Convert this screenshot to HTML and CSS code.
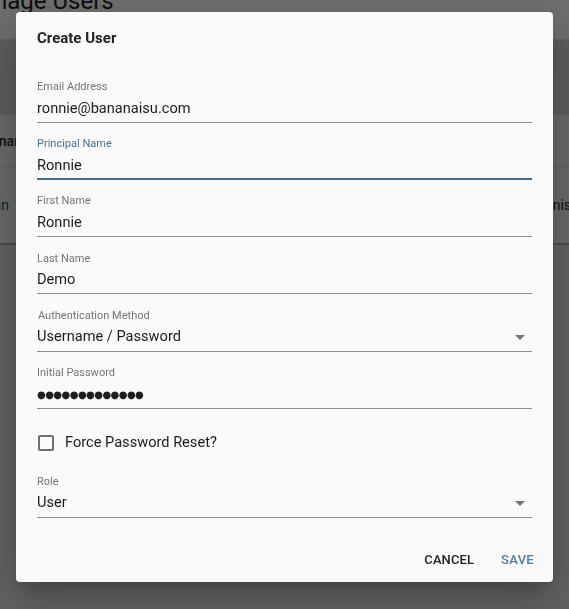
FILE: index.html
```html
<!DOCTYPE html>
<html lang="en">
<head>
<meta charset="utf-8">
<title>Create User</title>
<link rel="stylesheet" href="styles.css">
</head>
<body>
<div class="page">
  <header class="page-head"><h1 class="page-title">Manage Users</h1></header>
  <div class="toolbar"></div>
  <div class="table">
    <div class="trow thead"><span class="cell first">Username</span><span class="cell last">Role</span></div>
    <div class="trow tbody"><span class="cell first link">admin</span><span class="cell last">Administrator</span></div>
  </div>
</div>
<div class="backdrop"></div>
<div class="dialog" role="dialog">
  <h2 class="dialog-title">Create User</h2>
  <div class="dialog-content">
    <div class="field">
      <label class="field-label">Email Address</label>
      <div class="field-input">ronnie@bananaisu.com</div>
    </div>
    <div class="field focused">
      <label class="field-label">Principal Name</label>
      <div class="field-input">Ronnie</div>
    </div>
    <div class="field">
      <label class="field-label">First Name</label>
      <div class="field-input">Ronnie</div>
    </div>
    <div class="field">
      <label class="field-label">Last Name</label>
      <div class="field-input">Demo</div>
    </div>
    <div class="field select">
      <label class="field-label shifted">Authentication Method</label>
      <div class="field-input"><span class="value">Username / Password</span><svg class="arrow" viewBox="0 0 24 24" width="24" height="24"><path d="M7 10l5 5 5-5z"/></svg></div>
    </div>
    <div class="field">
      <label class="field-label">Initial Password</label>
      <div class="field-input dots">●●●●●●●●●●●●●</div>
    </div>
    <div class="check-row">
      <span class="checkbox"></span>
      <span class="check-label">Force Password Reset?</span>
    </div>
    <div class="field select role">
      <label class="field-label">Role</label>
      <div class="field-input"><span class="value">User</span><svg class="arrow" viewBox="0 0 24 24" width="24" height="24"><path d="M7 10l5 5 5-5z"/></svg></div>
    </div>
  </div>
  <div class="dialog-actions">
    <button class="btn">Cancel</button>
    <button class="btn primary">Save</button>
  </div>
</div>
</body>
</html>
```
FILE: styles.css
```css
html, body {
  margin: 0;
  padding: 0;
}
body {
  font-family: Roboto, "Liberation Sans", sans-serif;
  width: 569px;
  height: 609px;
  overflow: hidden;
}
.page {
  height: 609px;
  background: #c8c8c8;
  overflow: hidden;
}
.page-head {
  height: 39px;
  background: #dedede;
  border-bottom: 1px solid #c4c4c4;
  overflow: hidden;
}
.page-title {
  margin: -15px 0 0 -40px;
  font-size: 24px;
  line-height: 32px;
  font-weight: 400;
  color: #1a1a1a;
  white-space: nowrap;
}
.toolbar {
  height: 75px;
  background: #bcbcbc;
}
.table {
  background: #d6d6d6;
}
.trow {
  display: grid;
  grid-template-columns: 550px auto;
  align-items: center;
  margin-left: -30px;
  border-bottom: 1px solid #c0c0c0;
  font-size: 14px;
  color: #222;
  white-space: nowrap;
}
.thead {
  height: 51px;
  font-weight: 500;
}
.tbody {
  height: 76px;
  border-bottom: 2px solid #9a9a9a;
}
.link {
  color: #1d3a5a;
}
.backdrop {
  position: fixed;
  inset: 0;
  background: rgba(0, 0, 0, 0.5);
}
.dialog {
  position: fixed;
  left: 16px;
  top: 12px;
  width: 537px;
  height: 570px;
  box-sizing: border-box;
  background: #fafafa;
  border-radius: 4px;
  box-shadow: 0 11px 15px -7px rgba(0,0,0,0.2), 0 24px 38px 3px rgba(0,0,0,0.14), 0 9px 46px 8px rgba(0,0,0,0.12);
  display: flex;
  flex-direction: column;
  padding: 14px 21px 0;
}
.dialog-title {
  margin: 0;
  font-size: 15px;
  line-height: 24px;
  font-weight: 700;
  color: #212121;
}
.dialog-content {
  display: flex;
  flex-direction: column;
  padding-top: 15.8px;
}
.field {
  display: flex;
  flex-direction: column;
  margin-top: 14.2px;
}
.field-label {
  font-size: 11px;
  line-height: 13px;
  color: #757575;
}
.field-label.shifted {
  padding-left: 1px;
}
.field-input {
  display: flex;
  align-items: center;
  font-size: 14.6px;
  line-height: 19px;
  padding: 5.6px 0 4.4px;
  color: #1c1c1c;
  border-bottom: 1px solid #8f8f8f;
}
.field.focused .field-label {
  color: #4a7394;
}
.field.focused .field-input {
  padding-bottom: 3.4px;
  border-bottom: 2px solid #426b88;
}
.select .value {
  flex: 1;
}
.arrow {
  fill: #757575;
  margin: -3px 0 -2px;
  position: relative;
  top: 0.5px;
}
.dots {
  font-family: "DejaVu Sans", sans-serif;
  font-size: 10px;
  letter-spacing: -0.55px;
  color: #1e1e1e;
  position: relative;
  top: 0.5px;
}
.check-row {
  display: flex;
  align-items: center;
  height: 24px;
  margin-top: 21px;
}
.checkbox {
  width: 16px;
  height: 16px;
  box-sizing: border-box;
  border: 2px solid #6f6f6f;
  border-radius: 2px;
  margin: 2px 11px 0 1px;
}
.check-label {
  font-size: 14.6px;
  color: #1c1c1c;
}
.field.role {
  margin-top: 21px;
}
.dialog-actions {
  margin-top: auto;
  display: flex;
  justify-content: flex-end;
  gap: 11px;
  padding: 0 0 4px;
  margin-right: -10px;
}
.btn {
  font-family: Roboto, "Liberation Sans", sans-serif;
  font-size: 13px;
  font-weight: 500;
  line-height: 24.5px;
  letter-spacing: 0.1px;
  text-transform: uppercase;
  padding: 6px 8px;
  background: none;
  border: none;
  color: #212121;
}
.btn.primary {
  color: #4a7dab;
  letter-spacing: 0.3px;
}
```
